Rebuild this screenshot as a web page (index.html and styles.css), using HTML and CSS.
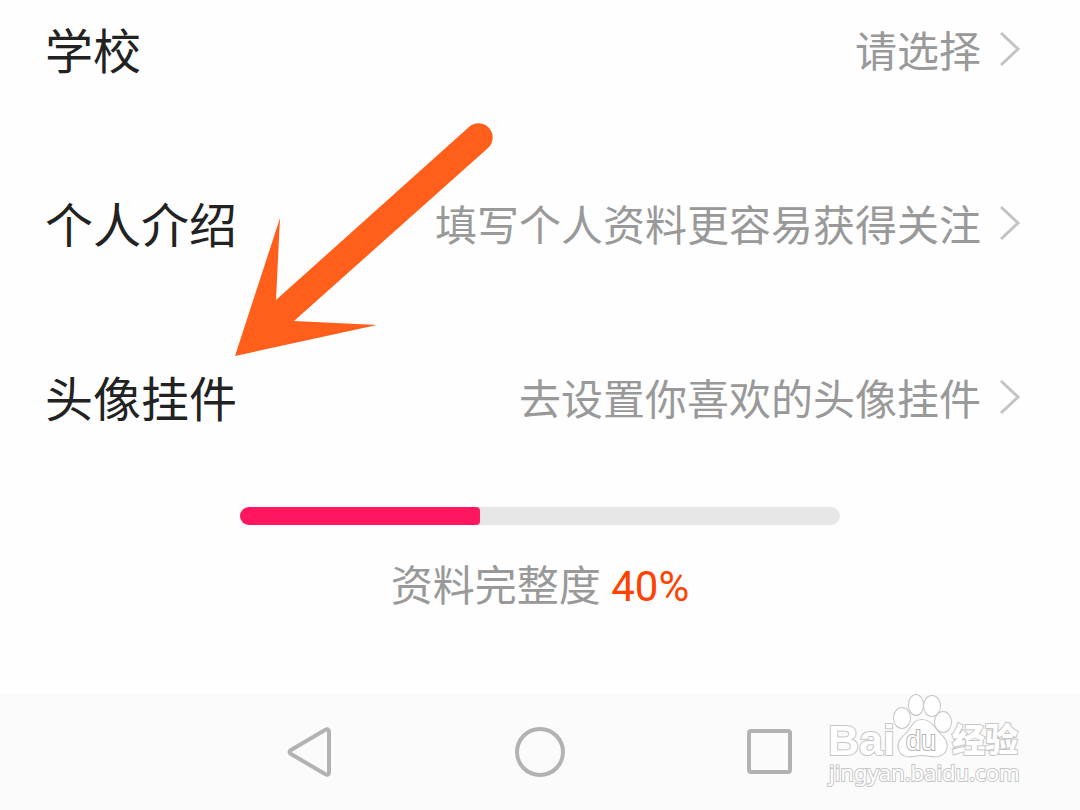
FILE: index.html
```html
<!DOCTYPE html>
<html lang="zh-CN">

<head>
    <meta charset="UTF-8">
    <meta name="viewport" content="width=device-width, initial-scale=1.0">
    <title>编辑资料</title>
    <link rel="stylesheet" href="styles.css">
</head>

<body>
    <main class="profile">
        <div class="list">
            <a class="row" href="#school">
                <span class="label">学校</span>
                <span class="value">请选择</span>
                <svg class="chevron" viewBox="0 0 22 36"><path d="M2 2 L19 18 L2 34" /></svg>
            </a>
            <a class="row" href="#intro">
                <span class="label">个人介绍</span>
                <span class="value">填写个人资料更容易获得关注</span>
                <svg class="chevron" viewBox="0 0 22 36"><path d="M2 2 L19 18 L2 34" /></svg>
            </a>
            <a class="row" href="#pendant">
                <span class="label">头像挂件</span>
                <span class="value">去设置你喜欢的头像挂件</span>
                <svg class="chevron" viewBox="0 0 22 36"><path d="M2 2 L19 18 L2 34" /></svg>
            </a>
        </div>

        <div class="complete">
            <progress class="bar" id="complete" value="40" max="100"></progress>
            <label class="completeText" for="complete">资料完整度 <span class="percent">40%</span></label>
        </div>

        <!-- arrow over the list -->
        <svg class="arrow" viewBox="0 0 260 234">
            <path d="M1 234 L46 96 L42 178 L235 5 A14 14 0 0 1 254 26 L60 199 L143 203 Z" />
        </svg>
    </main>

    <nav class="navbar">
        <button class="navBut" aria-label="返回">
            <svg viewBox="0 0 56 56"><path d="M43 6 Q47 4 47 8 V48 Q47 52 43 50 L9 30 Q6 28 9 26 Z" /></svg>
        </button>
        <button class="navBut" aria-label="主页">
            <svg viewBox="0 0 56 56"><circle cx="28" cy="28" r="23" /></svg>
        </button>
        <button class="navBut" aria-label="最近任务">
            <svg viewBox="0 0 56 56"><rect x="7" y="7" width="41" height="41" rx="2" /></svg>
        </button>

        <svg class="mark" viewBox="0 0 200 96">
            <text class="markLogo" x="3" y="61">Bai</text>
            <g class="paw">
                <ellipse cx="77" cy="24" rx="8" ry="10" />
                <ellipse cx="91" cy="11" rx="7" ry="10" />
                <ellipse cx="107" cy="12" rx="8" ry="10" />
                <ellipse cx="118" cy="28" rx="8" ry="10" />
                <path d="M97 26 C106 26 109 34 115 40 C122 46 124 53 119 59 C113 65 105 61 97 61 C89 61 81 65 76 59 C71 53 74 46 81 40 C87 34 88 26 97 26 Z" />
            </g>
            <text class="markDu" x="81" y="56">du</text>
            <text class="markCn" x="127" y="58">经验</text>
            <text class="markUrl" x="4" y="87">jingyan.baidu.com</text>
        </svg>
    </nav>
</body>

</html>
```

FILE: styles.css
```css
* {
    box-sizing: border-box;
}

body {
    margin: 0;
    min-height: 100vh;
    display: flex;
    flex-direction: column;
    background: #fefefe;
    font-family: Roboto, "Noto Sans CJK SC", sans-serif;
}

.profile {
    position: relative;
}

.list {
    display: flex;
    flex-direction: column;
    gap: 114px;
    padding: 23px 59px 0 45px;
}

.row {
    display: flex;
    align-items: center;
    height: 60px;
    text-decoration: none;
}

.label {
    font-size: 48px;
    line-height: 60px;
    color: #222;
}

.value {
    margin-left: auto;
    font-size: 42px;
    line-height: 60px;
    color: #999;
}

.chevron {
    width: 22px;
    height: 36px;
    margin: 0 0 8px 18px;
    fill: none;
    stroke: #c3c3c3;
    stroke-width: 3;
}

.complete {
    display: flex;
    flex-direction: column;
    align-items: center;
    gap: 32px;
    padding-top: 76px;
}

.bar {
    appearance: none;
    width: 100%;
    max-width: 600px;
    height: 18px;
    border: 0;
    border-radius: 9px;
    overflow: hidden;
}

.bar::-webkit-progress-bar {
    background: #e7e7e7;
}

.bar::-webkit-progress-value {
    background: #ff165e;
    border-radius: 0 4px 4px 0;
}

.completeText {
    font-size: 42px;
    line-height: 60px;
    color: #999;
}

.percent {
    color: #ff4200;
}

.arrow {
    position: absolute;
    left: 234px;
    top: 122px;
    width: 260px;
    height: 234px;
    fill: #ff5f1a;
    pointer-events: none;
}

.navbar {
    position: relative;
    display: grid;
    grid-template-columns: repeat(3, 1fr);
    align-items: center;
    justify-items: center;
    height: 116px;
    margin-top: auto;
    padding: 0 18%;
    background: #fbfbfb;
}

.navBut {
    display: flex;
    padding: 0;
    border: 0;
    background: none;
}

.navBut svg {
    width: 56px;
    height: 56px;
    fill: none;
    stroke: #b2b2b2;
    stroke-width: 4;
}

.mark {
    position: absolute;
    right: 55px;
    top: 0;
    width: 200px;
    height: 96px;
    overflow: visible;
    fill: #fff;
    stroke: #c6c6c6;
    stroke-width: 2;
    paint-order: stroke;
}

.markLogo {
    font: bold 43px "Liberation Sans", sans-serif;
}

.markDu {
    font: 27px "Liberation Sans", sans-serif;
    stroke: #b4b4b4;
}

.markCn {
    font: 900 33px "Noto Sans CJK SC", sans-serif;
}

.markUrl {
    font: 22px "Noto Sans", sans-serif;
}
```
